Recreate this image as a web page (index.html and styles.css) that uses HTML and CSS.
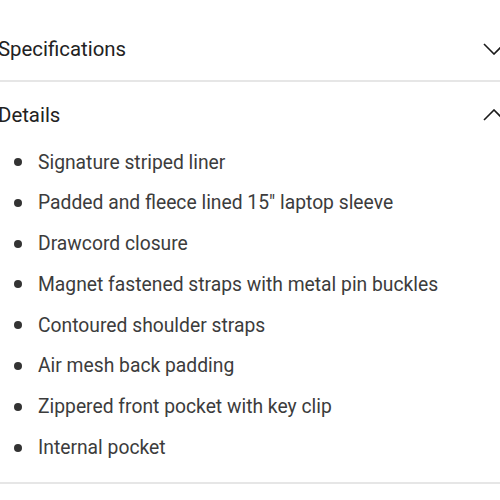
FILE: index.html
```html
<!DOCTYPE html>
<html>
<head>
<meta charset="utf-8">
<link rel="stylesheet" href="styles.css">
</head>
<body>
<div class="accordion">
  <section class="section">
    <div class="header header-first">
      <span class="title">Specifications</span>
      <svg class="chev" width="22" height="12" viewBox="0 0 22 12"><path d="M1 1 L11 11 L21 1" fill="none" stroke="#1a1a1a" stroke-width="1.6"/></svg>
    </div>
  </section>
  <section class="section">
    <div class="header header-second">
      <span class="title">Details</span>
      <svg class="chev" width="22" height="12" viewBox="0 0 22 12"><path d="M1 11 L11 1 L21 11" fill="none" stroke="#1a1a1a" stroke-width="1.6"/></svg>
    </div>
    <ul class="list">
      <li>Signature striped liner</li>
      <li>Padded and fleece lined 15" laptop sleeve</li>
      <li>Drawcord closure</li>
      <li>Magnet fastened straps with metal pin buckles</li>
      <li>Contoured shoulder straps</li>
      <li>Air mesh back padding</li>
      <li>Zippered front pocket with key clip</li>
      <li>Internal pocket</li>
    </ul>
  </section>
</div>
</body>
</html>
```
FILE: styles.css
```css
html, body {
  margin: 0;
  padding: 0;
  background: #ffffff;
}
body {
  padding-top: 17px;
  font-family: Roboto, "Liberation Sans", sans-serif;
  overflow: hidden;
}
.accordion {
  margin-left: -2px;
  width: 509px;
}
.section {
  border-bottom: 2px solid #e6e6e6;
}
.header {
  display: flex;
  align-items: center;
  justify-content: space-between;
  padding-right: 2px;
}
.header-first {
  height: 63px;
}
.header-second {
  height: 65px;
}
.title {
  font-size: 20.4px;
  color: #222222;
}
.chev {
  display: block;
}
.list {
  list-style: none;
  margin: 0;
  padding: 1px 0 20px 0;
  display: flex;
  flex-direction: column;
  gap: 12.8px;
}
.list li {
  display: flex;
  align-items: center;
  height: 28px;
  font-size: 19.3px;
  color: #3c3c3c;
}
.list li::before {
  content: "";
  width: 8px;
  height: 8px;
  border-radius: 50%;
  background: #333333;
  margin-left: 16px;
  margin-right: 16px;
  flex: none;
}
```
